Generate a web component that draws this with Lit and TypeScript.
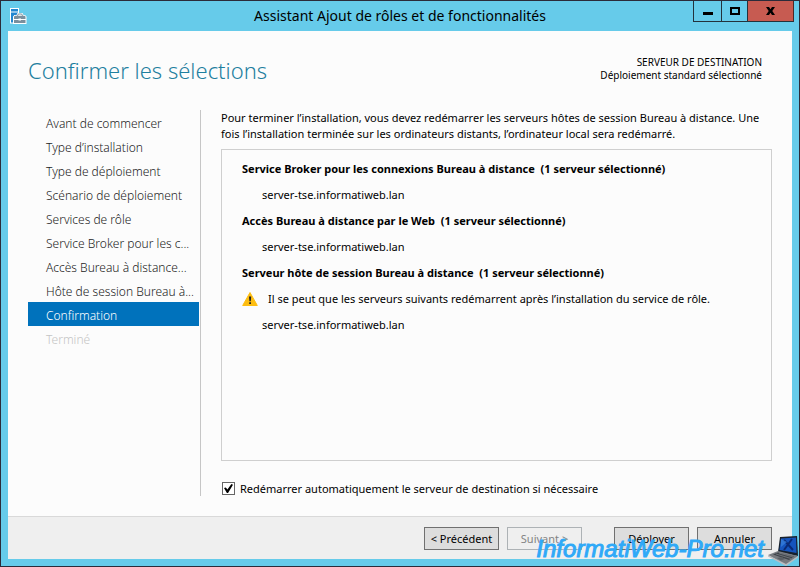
import { LitElement, html, css, nothing } from "lit";
import { customElement, state } from "lit/decorators.js";

interface Step {
  label: string;
  state?: "current" | "disabled";
}

interface Role {
  name: string;
  warning?: string;
  server: string;
}

const STEPS: Step[] = [
  { label: "Avant de commencer" },
  { label: "Type d’installation" },
  { label: "Type de déploiement" },
  { label: "Scénario de déploiement" },
  { label: "Services de rôle" },
  { label: "Service Broker pour les c..." },
  { label: "Accès Bureau à distance..." },
  { label: "Hôte de session Bureau à..." },
  { label: "Confirmation", state: "current" },
  { label: "Terminé", state: "disabled" },
];

const ROLES: Role[] = [
  { name: "Service Broker pour les connexions Bureau à distance", server: "server-tse.informatiweb.lan" },
  { name: "Accès Bureau à distance par le Web", server: "server-tse.informatiweb.lan" },
  {
    name: "Serveur hôte de session Bureau à distance",
    warning: "Il se peut que les serveurs suivants redémarrent après l’installation du service de rôle.",
    server: "server-tse.informatiweb.lan",
  },
];

@customElement("title-bar")
export class TitleBar extends LitElement {
  static styles = css`
    :host {
      display: grid;
      grid-template-columns: 104px 1fr 104px;
      height: 30px;
      background: #66cbea;
    }
    .app-icon {
      margin: 6px 0 0 8px;
    }
    h1 {
      margin: 0;
      font-size: 14px;
      font-weight: 400;
      line-height: 30px;
      text-align: center;
      white-space: nowrap;
    }
    .controls {
      display: flex;
      justify-self: end;
      margin-right: 5px;
      height: 21px;
    }
    button {
      display: grid;
      place-items: center;
      box-sizing: border-box;
      width: 26px;
      height: 21px;
      padding: 0;
      border: 1px solid #23323c;
      border-top: 0;
      border-right: 0;
      background: #66cbea;
    }
    .minimize {
      width: 28px;
    }
    .close {
      width: 47px;
      border-right: 1px solid #4a2a2a;
      background: #c75b51;
    }
  `;

  render() {
    return html`
      <svg class="app-icon" width="18" height="18" viewBox="0 0 18 18" aria-hidden="true">
        <path d="M1 1H10V16.500H1Z" fill="#fff" />
        <path d="M2 2H9V4.500H2ZM2 5.500H9V8H5V15.500H2Z" fill="#2186d0" />
        <path d="M4 17V9.500L5.500 8H7.500L8.500 6H13.500L14.500 8H16L17.500 9.500V17Z" fill="#fff" />
        <path d="M5 9.500 6 8.800H15.500L16.500 9.500V12H5ZM5 13H16.500V16H5Z" fill="#7b8f9d" />
        <path d="M8.500 8.800 9.300 7H12.700L13.500 8.800" fill="none" stroke="#7b8f9d" />
        <rect x="9.500" y="11.500" width="2.500" height="2" fill="#fff" />
      </svg>
      <h1>Assistant Ajout de rôles et de fonctionnalités</h1>
      <div class="controls">
        <button class="minimize" aria-label="Réduire">
          <svg width="10" height="10" viewBox="0 0 10 10"><path d="M0 6h10v3H0z" /></svg>
        </button>
        <button aria-label="Agrandir">
          <svg width="10" height="8" viewBox="0 0 10 8">
            <rect x="1" y="1" width="8" height="6" fill="none" stroke="#000" stroke-width="2" />
          </svg>
        </button>
        <button class="close" aria-label="Fermer">
          <svg width="9" height="8" viewBox="0 0 9 8">
            <path d="M0 0h3l1.500 2.300L6 0h3L6.300 4 9 8H6L4.500 5.700 3 8H0l2.700-4z" />
          </svg>
        </button>
      </div>
    `;
  }
}

@customElement("step-list")
export class StepList extends LitElement {
  static styles = css`
    :host {
      display: block;
      box-sizing: border-box;
      width: 173px;
      padding: 0 1px 0 0;
      border-right: 1px solid #c6c6c6;
    }
    ol {
      margin: 0;
      padding: 0;
      list-style: none;
    }
    a {
      display: block;
      padding: 4px 0 0 18px;
      color: #222;
      font-size: 12px;
      font-weight: 300;
      line-height: 20px;
      text-decoration: none;
      white-space: nowrap;
    }
    .current {
      background: #0072bc;
      color: #fff;
    }
    .disabled {
      color: #c4c4c4;
    }
  `;

  render() {
    return html`
      <nav aria-label="Étapes">
        <ol>
          ${STEPS.map(
            (s) => html`<li>
              <a class=${s.state ?? "step"} href="#" aria-current=${s.state === "current" ? "step" : nothing}>${s.label}</a>
            </li>`,
          )}
        </ol>
      </nav>
    `;
  }
}

@customElement("role-summary")
export class RoleSummary extends LitElement {
  static styles = css`
    :host {
      display: block;
      padding: 6px 20px;
      border: 1px solid #cfcfcf;
      line-height: 26px;
    }
    h3 {
      margin: 0;
      font-size: 11px;
      font-weight: 700;
      white-space: pre;
    }
    p {
      margin: 0;
    }
    .server {
      padding-left: 20px;
    }
    .warning {
      display: flex;
      align-items: center;
      gap: 10px;
    }
  `;

  render() {
    return ROLES.map(
      (r) => html`
        <section>
          <h3>${r.name}  (1 serveur sélectionné)</h3>
          ${r.warning
            ? html`<p class="warning">
                <svg width="16" height="14" viewBox="0 0 16 14" aria-hidden="true">
                  <path d="M8 .5 15.300 13.500H.7Z" fill="#fdbd10" stroke="#fdbd10" stroke-linejoin="round" />
                  <path d="M7 4.500h2.200L8.800 9.200H7.400ZM7.200 10.200h1.800V12H7.200Z" fill="#222" />
                </svg>
                <span>${r.warning}</span>
              </p>`
            : nothing}
          <p class="server">${r.server}</p>
        </section>
      `,
    );
  }
}

@customElement("site-mark")
export class SiteMark extends LitElement {
  static styles = css`
    :host {
      position: absolute;
      right: 0;
      bottom: 0;
      display: flex;
      align-items: flex-end;
      gap: 3px;
      pointer-events: none;
    }
    span {
      color: #2fa9f8;
      font: italic 400 24px/34px "Liberation Sans", Arial, sans-serif;
      -webkit-text-stroke: 1px #2fa9f8;
      white-space: nowrap;
    }
  `;

  render() {
    return html`
      <span>InformatiWeb-Pro.net</span>
      <svg width="32" height="31" viewBox="0 0 32 31" aria-hidden="true">
        <path d="M13 2 30 1 31 21 11 17Z" fill="#17202c" />
        <path d="M14 3.500 29 2.500 29.500 18 12.500 15Z" fill="#1554bd" />
        <path d="m17 5 9 10M25 4l-8 11" stroke="#0a2a76" stroke-width="2" />
        <path d="m14 4 6 3-6 5z" fill="#3b83df" opacity=".7" />
        <path d="M11 16 31 21 19 30 1 20Z" fill="#777b80" />
        <path d="m11 17.500 16 4-5 3.500-16-5.500Z" fill="#3f444a" />
        <path d="m9 19 15 4.500M12 18l14 4" stroke="#8a8f95" stroke-width=".6" />
        <path d="m10 23 5-1 3 2-4 1.500Z" fill="#5a5f65" />
        <path d="m1 20 18 9 12-8v1.500L19 31 1 21.500Z" fill="#b9bcc0" />
      </svg>
    `;
  }
}

@customElement("app-root")
export class AppRoot extends LitElement {
  @state() private restart = true;

  static styles = css`
    :host {
      position: relative;
      display: flex;
      flex-direction: column;
      box-sizing: border-box;
      min-height: 100vh;
      border: 1px solid #2b2b3a;
      background: #66cbea;
      color: #000;
      font: 11px/16px "Noto Sans", "Open Sans", sans-serif;
    }
    .window {
      display: flex;
      flex: 1;
      flex-direction: column;
      margin: 0 7px 7px;
      background: #fcfcfc;
    }
    header {
      display: flex;
      justify-content: space-between;
      padding: 22px 30px 0 20px;
    }
    h2 {
      margin: 0;
      color: #1f7f9f;
      font-size: 22px;
      font-weight: 300;
      line-height: 34px;
    }
    .target {
      font-size: 10px;
      line-height: 13px;
      text-align: right;
      padding-top: 3px;
    }
    .target p {
      margin: 0;
    }
    .body {
      display: flex;
      flex: 1;
      gap: 20px;
      padding: 23px 20px 20px;
    }
    main {
      display: flex;
      flex: 1;
      flex-direction: column;
      min-width: 0;
    }
    .intro {
      margin: 0 0 7px;
    }
    role-summary {
      flex: 1;
    }
    .restart {
      display: flex;
      align-items: center;
      gap: 5px;
      margin: 20px 0 0 1px;
      line-height: 15px;
    }
    .restart input {
      display: grid;
      place-items: center;
      box-sizing: border-box;
      width: 13px;
      height: 13px;
      margin: 0;
      appearance: none;
      border: 1px solid #666;
      background: #fff;
    }
    .restart input:checked::before {
      content: "";
      width: 9px;
      height: 9px;
      background: #000;
      clip-path: polygon(0 45%, 20% 38%, 38% 62%, 82% 0, 100% 8%, 45% 100%, 32% 100%);
    }
    footer {
      display: flex;
      justify-content: flex-end;
      gap: 8px;
      padding: 10px 20px 9px;
      border-top: 1px solid #d9d9d9;
      background: #efefef;
    }
    footer button {
      box-sizing: border-box;
      width: 75px;
      height: 23px;
      padding: 0;
      border: 1px solid #707070;
      background: #ddd;
      color: #000;
      font: inherit;
      white-space: nowrap;
    }
    footer button:disabled {
      border-color: #adb2b5;
      background: #efefef;
      color: #838383;
    }
    .action {
      margin-left: 24px;
    }
  `;

  render() {
    return html`
      <title-bar></title-bar>
      <div class="window">
        <header>
          <h2>Confirmer les sélections</h2>
          <div class="target">
            <p>SERVEUR DE DESTINATION</p>
            <p>Déploiement standard sélectionné</p>
          </div>
        </header>
        <div class="body">
          <step-list></step-list>
          <main>
            <p class="intro">
              Pour terminer l’installation, vous devez redémarrer les serveurs hôtes de session Bureau à distance. Une
              fois l’installation terminée sur les ordinateurs distants, l’ordinateur local sera redémarré.
            </p>
            <role-summary></role-summary>
            <label class="restart">
              <input
                type="checkbox"
                .checked=${this.restart}
                @change=${(e: Event) => (this.restart = (e.target as HTMLInputElement).checked)}
              />
              Redémarrer automatiquement le serveur de destination si nécessaire
            </label>
          </main>
        </div>
        <footer>
          <button>&lt; Précédent</button>
          <button disabled>Suivant &gt;</button>
          <button class="action">Déployer</button>
          <button>Annuler</button>
        </footer>
      </div>
      <site-mark></site-mark>
    `;
  }
}
